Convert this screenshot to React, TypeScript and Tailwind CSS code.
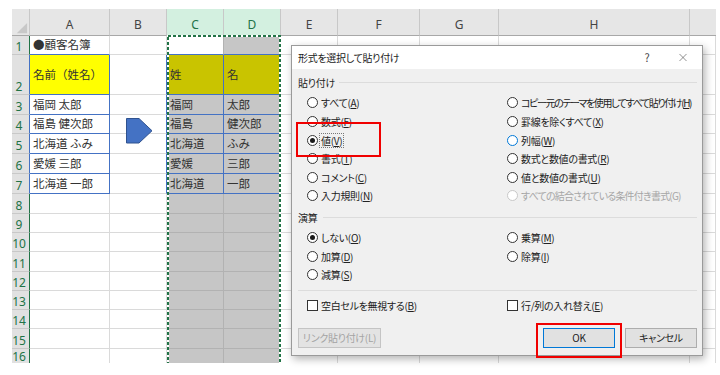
import React from "react";
import clsx from "clsx";
import { X } from "lucide-react";

// sheet geometry (measured from the screenshot)
const COLS = ["", "A", "B", "C", "D", "E", "F", "G", "H", ""];
const LAST_ROW = 16;

const DATA: Record<string, string> = {
  "1-1": "●顧客名簿",
  "2-1": "名前（姓名）",
  "3-1": "福岡 太郎",
  "4-1": "福島 健次郎",
  "5-1": "北海道 ふみ",
  "6-1": "愛媛 三郎",
  "7-1": "北海道 一郎",
  "2-3": "姓",
  "2-4": "名",
  "3-3": "福岡",
  "3-4": "太郎",
  "4-3": "福島",
  "4-4": "健次郎",
  "5-3": "北海道",
  "5-4": "ふみ",
  "6-3": "愛媛",
  "6-4": "三郎",
  "7-3": "北海道",
  "7-4": "一郎",
};

const isBlue = (r: number, c: number) => r >= 2 && r <= 7 && (c === 1 || c === 3 || c === 4);
const isSel = (c: number) => c === 3 || c === 4;

function cellClass(r: number, c: number) {
  // header row
  if (r === 0) {
    if (c === 0) return "bg-[#e6e6e6] border-r border-b border-r-[#c8c8c8] border-b-[#a8a8a8]";
    if (isSel(c))
      return "bg-[#d3f0e0] text-[#217346] border-r border-b border-r-[#c8c8c8] border-b-[#217346] justify-center items-end pb-[4px]";
    return clsx(
      "bg-[#e6e6e6] text-[#444] border-b border-b-[#a8a8a8] justify-center items-end pb-[4px]",
      c !== 9 && "border-r border-r-[#c8c8c8]"
    );
  }
  // row numbers
  if (c === 0) {
    return clsx(
      "bg-[#e1e1e1] text-[#217346] border-r justify-center pr-[3px]",
      r === LAST_ROW ? "items-start pt-[2px] overflow-hidden" : "items-end pb-[1px]",
      isBlue(r, 1) ? "border-r-[#4472c4]" : "border-r-[#217346]",
      r !== LAST_ROW && "border-b border-b-[#c8c8c8]"
    );
  }
  const sel = isSel(c);
  let bg = "bg-white";
  if (r === 2 && c === 1) bg = "bg-[#ffff00]";
  else if (sel && r === 2) bg = "bg-[#c9c400]";
  else if (sel && !(r === 1 && c === 3)) bg = "bg-[#c6c6c6]";
  const right =
    isBlue(r, c) || isBlue(r, c + 1)
      ? "border-r-[#4472c4]"
      : sel
        ? "border-r-[#b2b2b2]"
        : "border-r-[#dadada]";
  const bottom =
    r === LAST_ROW
      ? "border-b-0"
      : isBlue(r, c) || isBlue(r + 1, c)
        ? "border-b border-b-[#4472c4]"
        : sel
          ? "border-b border-b-[#b2b2b2]"
          : "border-b border-b-[#dadada]";
  return clsx(bg, "border-r items-center pl-[3px] text-[#333]", right, bottom);
}

function Sheet() {
  const rows = Array.from({ length: LAST_ROW + 1 }, (_, i) => i);
  return (
    <div className="pl-[12px] pt-[9px]">
      <div className="grid grid-cols-[18px_80px_57px_57px_57px_57px_82px_79px_191px_26px] grid-rows-[27px_19px_40px_20px_19px_20px_20px_20px_20px_19px_19px_20px_19px_19px_19px_20px_14px] font-['Noto_Sans','Noto_Sans_CJK_JP',sans-serif]">
        {rows.map((r) =>
          COLS.map((col, c) => {
            let content: React.ReactNode = null;
            if (r === 0 && c === 0) {
              content = (
                <svg width="18" height="27" viewBox="0 0 18 27" className="block">
                  <polygon points="16,14 16,25 5,25" fill="#c8c8c8" />
                </svg>
              );
            } else if (r === 0) content = col;
            else if (c === 0) content = r;
            else content = DATA[`${r}-${c}`] ?? null;
            return (
              <div
                key={`${r}-${c}`}
                className={clsx(
                  "flex whitespace-nowrap leading-none",
                  r === 0 || c === 0 ? "text-[12px]" : "text-[11.5px] font-['Noto_Sans_CJK_JP',sans-serif]",
                  cellClass(r, c)
                )}
              >
                {content}
              </div>
            );
          })
        )}
      </div>
    </div>
  );
}

type RadioProps = {
  text: string;
  k: string;
  checked?: boolean;
  disabled?: boolean;
  hover?: boolean;
  focus?: boolean;
  tight?: string;
};

function Radio({ text, k, checked = false, disabled = false, hover = false, focus = false, tight }: RadioProps) {
  return (
    <div className="flex h-[18.6px] items-center">
      <span
        className={clsx(
          "flex h-[11px] w-[11px] shrink-0 items-center justify-center rounded-full border bg-white",
          disabled ? "border-[#c8c8c8]" : hover ? "border-[#0078d7]" : "border-[#333]"
        )}
      >
        {checked && <span className="h-[5px] w-[5px] rounded-full bg-[#1a1a1a]" />}
      </span>
      <span
        className={clsx(
          "whitespace-nowrap leading-[13px]",
          disabled ? "text-[#a6a6a6]" : "text-[#222]",
          focus ? "ml-[1px] border border-dotted border-[#777] px-px" : "ml-[3px]",
          tight
        )}
      >
        {text}({disabled ? k : <u>{k}</u>})
      </span>
    </div>
  );
}

function Check({ text, k }: { text: string; k: string }) {
  return (
    <div className="flex h-[18.6px] items-center">
      <span className="h-[11px] w-[11px] shrink-0 border border-[#333] bg-white" />
      <span className="ml-[3px] whitespace-nowrap text-[#222]">
        {text}(<u>{k}</u>)
      </span>
    </div>
  );
}

function GroupLabel({ title, gap }: { title: string; gap: string }) {
  return (
    <div className="flex h-[14px] items-center pr-[5px]">
      <span className="text-[#222]">{title}</span>
      <span className={clsx("h-px flex-1 bg-[#dcdcdc]", gap)} />
    </div>
  );
}

function PasteDialog() {
  return (
    <div className="absolute left-[291px] top-[45px] flex h-[311px] w-[412px] flex-col border border-[#9a9a9a] bg-[#f0f0f0] text-[10px] tracking-[-0.3px] shadow-[2px_3px_8px_rgba(0,0,0,0.3)] [font-feature-settings:'palt'] font-['Noto_Sans_CJK_JP',sans-serif]">
      {/* title bar */}
      <div className="flex h-[23px] shrink-0 items-center justify-between bg-white pl-[6px] pr-[12px] text-[#222]">
        <span>形式を選択して貼り付け</span>
        <div className="flex items-center gap-[21px]">
          <span className="w-4 text-center text-[11px] text-[#444]">?</span>
          <X className="h-[13px] w-[14px] text-[#333]" strokeWidth={1} />
        </div>
      </div>

      <div className="flex flex-1 flex-col pl-[6px] pt-[6px]">
        <GroupLabel title="貼り付け" gap="ml-1" />
        <div className="mt-[4.7px] grid grid-cols-[200px_1fr] pl-[9px]">
          <div>
            <Radio text="すべて" k="A" />
            <Radio text="数式" k="F" />
            <Radio text="値" k="V" checked focus />
            <Radio text="書式" k="T" />
            <Radio text="コメント" k="C" />
            <Radio text="入力規則" k="N" />
          </div>
          <div>
            <Radio text="コピー元のテーマを使用してすべて貼り付け" k="H" tight="tracking-[-1.4px]" />
            <Radio text="罫線を除くすべて" k="X" />
            <Radio text="列幅" k="W" hover />
            <Radio text="数式と数値の書式" k="R" />
            <Radio text="値と数値の書式" k="U" />
            <Radio text="すべての結合されている条件付き書式" k="G" disabled tight="tracking-[-0.8px]" />
          </div>
        </div>

        <div className="mt-[5.4px]">
          <GroupLabel title="演算" gap="ml-[6px]" />
        </div>
        <div className="mt-[3.7px] grid grid-cols-[200px_1fr] pl-[9px]">
          <div>
            <Radio text="しない" k="O" checked />
            <Radio text="加算" k="D" />
            <Radio text="減算" k="S" />
          </div>
          <div>
            <Radio text="乗算" k="M" />
            <Radio text="除算" k="I" />
          </div>
        </div>

        <div className="mr-[5px] mt-[5.5px] h-px bg-[#dcdcdc]" />
        <div className="mt-[5.7px] grid grid-cols-[200px_1fr] pl-[9px]">
          <Check text="空白セルを無視する" k="B" />
          <Check text="行/列の入れ替え" k="E" />
        </div>

        <div className="mt-[13px] flex items-center pr-[5px]">
          <button className="h-[20px] w-[83px] border border-[#c4c4c4] bg-[#e3e3e3] text-[10px] text-[#a3a3a3]">
            リンク貼り付け(L)
          </button>
          <button className="ml-auto h-[20px] w-[72px] border border-[#0078d7] bg-[#e1e1e1] text-[10px] text-[#222]">
            OK
          </button>
          <button className="ml-[10px] h-[20px] w-[72px] border border-[#adadad] bg-[#e1e1e1] text-[10px] text-[#222]">
            キャンセル
          </button>
        </div>
      </div>
    </div>
  );
}

export default function App() {
  return (
    <div className="relative h-[375px] w-[720px] overflow-hidden bg-white">
      <Sheet />

      {/* copy marquee around C:D, cut at the sheet's bottom edge */}
      <svg className="absolute left-[166px] top-[34px]" width="116" height="329" viewBox="0 0 116 329">
        <rect x="2" y="2" width="112" height="360" fill="none" stroke="#ffffff" strokeWidth="2" />
        <rect x="2" y="2" width="112" height="360" fill="none" stroke="#217346" strokeWidth="2" strokeDasharray="3 2" />
      </svg>

      {/* arrow shape */}
      <svg className="absolute left-[126px] top-[118px]" width="27" height="26" viewBox="0 0 27 26">
        <polygon points="0.5,0.5 13,0.5 26,12.75 13,25 0.5,25" fill="#4472c4" stroke="#2f528f" strokeWidth="1" />
      </svg>

      <PasteDialog />

      {/* red highlight boxes */}
      <div className="absolute left-[296px] top-[122px] h-[35px] w-[85px] border-2 border-[#f00000]" />
      <div className="absolute left-[536px] top-[323px] h-[35px] w-[86px] border-2 border-[#f00000]" />
    </div>
  );
}
